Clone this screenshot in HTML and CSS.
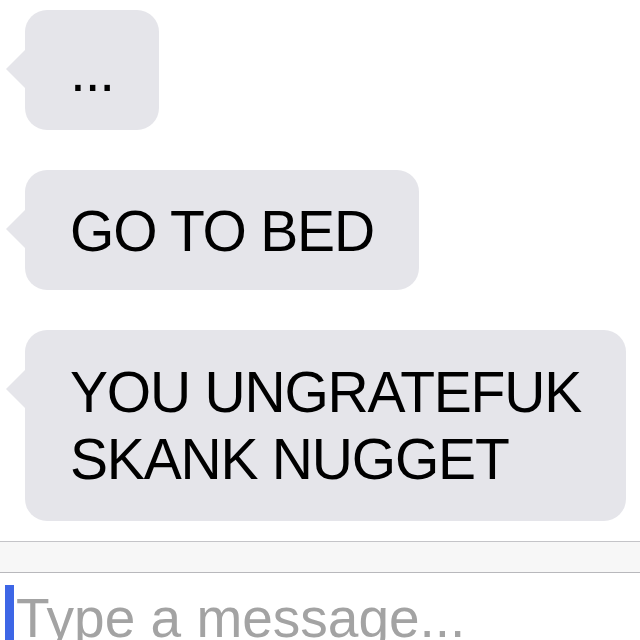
FILE: index.html
```html
<!DOCTYPE html>
<html lang="en">
<head>
    <meta charset="UTF-8">
    <meta name="viewport" content="width=device-width, initial-scale=1.0">
    <title>Messages</title>
    <link rel="stylesheet" href="styles.css">
</head>
<body>
    <div class="thread">
        <div class="bubble">...</div>
        <div class="bubble">GO TO BED</div>
        <div class="bubble long">YOU UNGRATEFUK<br>SKANK NUGGET</div>
    </div>

    <!-- Composer -->
    <div class="composer">
        <div class="toolbar"></div>
        <div class="input-row">
            <span class="cursor"></span>
            <span class="placeholder">Type a message...</span>
        </div>
    </div>
</body>
</html>
```

FILE: styles.css
```css
body {
    font-family: 'Liberation Sans', Arial, sans-serif;
    background: #fff;
    color: #000;
    margin: 0;
    padding: 0;
    height: 640px;
    overflow: hidden;
    display: flex;
    flex-direction: column;
}

.thread {
    flex: 1;
    display: flex;
    flex-direction: column;
    align-items: flex-start;
    gap: 40px;
    padding-top: 10px;
}

.bubble {
    position: relative;
    margin-left: 25px;
    padding: 28px 45px 26px;
    background: #e5e5ea;
    border-radius: 22px;
    font-size: 57px;
    line-height: 66px;
    letter-spacing: -1.2px;
    white-space: nowrap;
}

.bubble::before {
    content: "";
    position: absolute;
    left: -19px;
    top: 40px;
    border-top: 19px solid transparent;
    border-bottom: 19px solid transparent;
    border-right: 19px solid #e5e5ea;
}

.bubble.long {
    line-height: 67px;
    padding-top: 29px;
    padding-bottom: 28px;
}

.composer {
    border-top: 1px solid #c4c4c8;
}

.toolbar {
    height: 30px;
    background: #f7f7f7;
    border-bottom: 1px solid #b8b8bc;
}

.input-row {
    height: 67px;
    display: flex;
    align-items: flex-start;
    overflow: hidden;
}

.cursor {
    width: 9px;
    height: 60px;
    margin: 12px 0 0 5px;
    background: #3d66e6;
    flex-shrink: 0;
}

.placeholder {
    margin: 15px 0 0 2px;
    font-size: 55px;
    line-height: 60px;
    color: #a3a3a3;
    white-space: nowrap;
}
```
